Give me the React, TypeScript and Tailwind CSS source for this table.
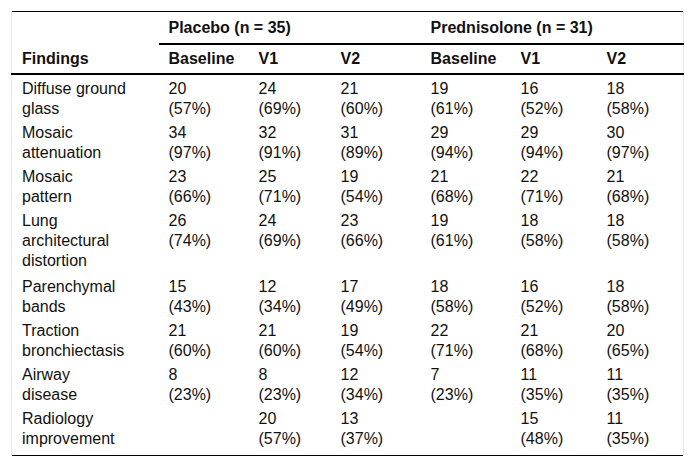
type Cell = [string, string] | null;

interface Row {
  label: string[];
  cells: Cell[];
}

const ROWS: Row[] = [
  {
    label: ['Diffuse ground', 'glass'],
    cells: [['20', '(57%)'], ['24', '(69%)'], ['21', '(60%)'], ['19', '(61%)'], ['16', '(52%)'], ['18', '(58%)']],
  },
  {
    label: ['Mosaic', 'attenuation'],
    cells: [['34', '(97%)'], ['32', '(91%)'], ['31', '(89%)'], ['29', '(94%)'], ['29', '(94%)'], ['30', '(97%)']],
  },
  {
    label: ['Mosaic', 'pattern'],
    cells: [['23', '(66%)'], ['25', '(71%)'], ['19', '(54%)'], ['21', '(68%)'], ['22', '(71%)'], ['21', '(68%)']],
  },
  {
    label: ['Lung', 'architectural', 'distortion'],
    cells: [['26', '(74%)'], ['24', '(69%)'], ['23', '(66%)'], ['19', '(61%)'], ['18', '(58%)'], ['18', '(58%)']],
  },
  {
    label: ['Parenchymal', 'bands'],
    cells: [['15', '(43%)'], ['12', '(34%)'], ['17', '(49%)'], ['18', '(58%)'], ['16', '(52%)'], ['18', '(58%)']],
  },
  {
    label: ['Traction', 'bronchiectasis'],
    cells: [['21', '(60%)'], ['21', '(60%)'], ['19', '(54%)'], ['22', '(71%)'], ['21', '(68%)'], ['20', '(65%)']],
  },
  {
    label: ['Airway', 'disease'],
    cells: [['8', '(23%)'], ['8', '(23%)'], ['12', '(34%)'], ['7', '(23%)'], ['11', '(35%)'], ['11', '(35%)']],
  },
  {
    label: ['Radiology', 'improvement'],
    cells: [null, ['20', '(57%)'], ['13', '(37%)'], null, ['15', '(48%)'], ['11', '(35%)']],
  },
];

const SUB = ['Baseline', 'V1', 'V2', 'Baseline', 'V1', 'V2'];

function Lines({ lines }: { lines: string[] }) {
  return (
    <>
      {lines.map((l, i) => (
        <div key={i}>{l}</div>
      ))}
    </>
  );
}

// padding per body row, tuned so rows land where the reference has them
function rowPad(r: number, count: number) {
  if (r === 0) return 'pt-[4px] pb-[2px]';
  if (r === 3) return 'pt-[2px] pb-[4px]';
  if (r === count - 1) return 'pt-[2px] pb-[6px]';
  return 'py-[2px]';
}

export default function App() {
  return (
    <div className="min-h-[468px] bg-white pl-[11px] pt-[11px] text-[16px] leading-[20px] text-[#111] [font-family:'Liberation_Sans',Arial,sans-serif]">
      <table className="w-[672px] table-fixed border-collapse border-y border-black">
        <colgroup>
          <col className="w-[147px]" />
          <col className="w-[90px]" />
          <col className="w-[82px]" />
          <col className="w-[90px]" />
          <col className="w-[90px]" />
          <col className="w-[86px]" />
          <col className="w-[87px]" />
        </colgroup>
        <thead>
          <tr>
            <th
              rowSpan={2}
              className="border-b-2 border-l border-b-black border-l-[#e6e6e6] pb-[4px] pl-[10px] text-left align-bottom font-bold"
            >
              Findings
            </th>
            <th colSpan={3} className="border-b-2 border-black pb-[5px] pl-[10px] pt-[6px] text-left font-bold">
              Placebo (n = 35)
            </th>
            <th
              colSpan={3}
              className="border-b-2 border-r border-b-black border-r-[#e6e6e6] pb-[5px] pl-[10px] pt-[6px] text-left font-bold"
            >
              Prednisolone (n = 31)
            </th>
          </tr>
          <tr>
            {SUB.map((s, i) => (
              <th
                key={i}
                className={`border-b-2 border-b-black py-[4px] pl-[10px] text-left font-bold ${
                  i === 5 ? 'border-r border-r-[#e6e6e6]' : ''
                }`}
              >
                {s}
              </th>
            ))}
          </tr>
        </thead>
        <tbody>
          {ROWS.map((row, r) => {
            const pad = rowPad(r, ROWS.length);
            return (
              <tr key={r}>
                <td className={`border-l border-[#e6e6e6] pl-[10px] align-top ${pad}`}>
                  <Lines lines={row.label} />
                </td>
                {row.cells.map((c, i) => (
                  <td
                    key={i}
                    className={`pl-[10px] align-top ${pad} ${i === 5 ? 'border-r border-[#e6e6e6]' : ''}`}
                  >
                    {c ? <Lines lines={c} /> : null}
                  </td>
                ))}
              </tr>
            );
          })}
        </tbody>
      </table>
    </div>
  );
}
